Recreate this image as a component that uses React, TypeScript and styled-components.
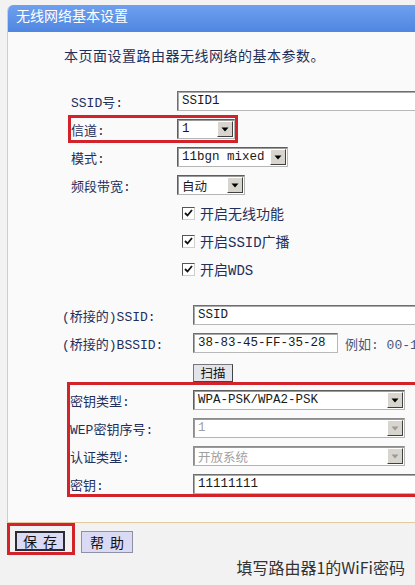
import { createGlobalStyle, styled } from "styled-components";

const RED = "#d2232a";
const NAVY = "#1f2f5a";
const UI_FONT = `"Liberation Mono", "Noto Sans CJK SC", monospace`;
const CJK_FONT = `"Noto Sans CJK SC", "Noto Sans", sans-serif`;

const GlobalStyle = createGlobalStyle`
  html, body {
    margin: 0;
    padding: 0;
    background: #f2f2f2;
    overflow: hidden;
  }
  * {
    box-sizing: border-box;
  }
`;

const Page = styled.div`
  width: 415px;
  height: 585px;
  overflow: hidden;
  padding-top: 5px;
  background: #f2f2f2;
`;

const Panel = styled.div`
  width: 470px;
  margin-left: 7px;
  background: #fafafa;
  border-left: 1px solid #e4cb9f;
  border-bottom: 1px solid #e4cb9f;
  border-top-left-radius: 6px;
  overflow: hidden;
`;

const PanelHeader = styled.div`
  height: 27px;
  padding-left: 8px;
  line-height: 27px;
  color: #fff;
  font: 14px ${CJK_FONT};
  background: linear-gradient(#6ea0f0, #4f86e0);
`;

const PanelBody = styled.div`
  padding: 15px 0 25px;
`;

const Intro = styled.p`
  margin: 0 0 24px 56px;
  font: 14px/16px ${CJK_FONT};
  letter-spacing: 0.5px;
  color: ${NAVY};
`;

const Section = styled.div<{ $indent: number; $gap?: number }>`
  margin-left: ${({ $indent }) => $indent}px;
  margin-bottom: ${({ $gap }) => $gap ?? 0}px;
`;

const Field = styled.div`
  display: flex;
  align-items: center;
`;

const Row = styled(Field)<{ $marked?: boolean }>`
  height: 28px;
  width: max-content;
  border: 3px solid ${({ $marked }) => ($marked ? RED : "transparent")};
`;

const Label = styled.span<{ $w: number }>`
  width: ${({ $w }) => $w}px;
  flex: none;
  white-space: nowrap;
  font: 13px ${UI_FONT};
  color: ${NAVY};
`;

const Hint = styled.span`
  margin-left: 7px;
  white-space: nowrap;
  font: 13px ${UI_FONT};
  color: #4a5878;
`;

const TextInput = styled.input<{ $w: number }>`
  width: ${({ $w }) => $w}px;
  height: 20px;
  margin: 0;
  padding: 0 4px;
  font: 12.5px ${UI_FONT};
  color: #1a1a1a;
  background: #fff;
  border: 1px solid #6f6f6f;
  border-right-color: #b8b8b8;
  border-bottom-color: #b8b8b8;
  box-shadow: inset 1px 1px 0 #a9a9a9;
  outline: none;
`;

const SelectBox = styled.div<{ $w: number; $off?: boolean }>`
  width: ${({ $w }) => $w}px;
  height: 20px;
  display: flex;
  align-items: center;
  padding: 1px;
  background: #fff;
  border: 1px solid ${({ $off }) => ($off ? "#8c8c8c" : "#5e5e5e")};
  border-right-color: #b5b5b5;
  border-bottom-color: #b5b5b5;
  box-shadow: inset 1px 1px 0 #9a9a9a;
`;

const SelectValue = styled.span<{ $off?: boolean }>`
  flex: 1;
  padding-left: 3px;
  white-space: nowrap;
  overflow: hidden;
  font: 12.5px ${UI_FONT};
  color: ${({ $off }) => ($off ? "#a0a0a0" : "#1a1a1a")};
`;

const ArrowButton = styled.span<{ $off?: boolean }>`
  width: 16px;
  height: 16px;
  flex: none;
  display: flex;
  align-items: center;
  justify-content: center;
  background: #d8d5cf;
  border: 1px solid;
  border-color: #fff #404040 #404040 #fff;
  color: ${({ $off }) => ($off ? "#9a9a9a" : "#000")};
`;

const CheckItem = styled.label`
  display: flex;
  align-items: center;
  gap: 5px;
  margin-left: 5px;
  font: 14px ${UI_FONT};
  color: ${NAVY};
`;

const CheckBox = styled.span`
  width: 13px;
  height: 13px;
  display: flex;
  align-items: center;
  justify-content: center;
  background: #fff;
  border: 1px solid;
  border-color: #555 #cfcfcf #cfcfcf #555;
`;

const ScanRow = styled.div`
  padding: 7px 0 0 193px;
  margin-left: -8px;
  height: 25px;
`;

const Button = styled.button<{ $focus?: boolean; $w: number }>`
  width: ${({ $w }) => $w}px;
  height: ${({ $focus }) => ($focus ? 20 : 22)}px;
  margin: 0;
  padding: 0 0 0 6px;
  font: 14px ${CJK_FONT};
  letter-spacing: 6px;
  line-height: 1;
  color: #111;
  background: #dadaf4;
  border: ${({ $focus }) => ($focus ? "2px solid #2b2b36" : "1px solid #8f90a6")};
`;

const ScanButton = styled(Button)`
  height: 18px;
  padding: 0;
  font-size: 12.5px;
  letter-spacing: 0;
  background: #e3e3ec;
  border: 1px solid #777;
  border-right-color: #444;
  border-bottom-color: #444;
`;

const KeyGroup = styled.div`
  width: 500px;
  margin-left: 59px;
  padding-top: 5px;
  display: flex;
  flex-direction: column;
  gap: 8px;
  border-style: solid;
  border-color: ${RED};
  border-width: 3px 0 3px 3px;
`;

const ButtonBar = styled.div`
  display: flex;
  align-items: flex-start;
  padding-left: 7px;
`;

const SaveMark = styled.div`
  padding: 5px 7px 1px 5px;
  border: 3px solid ${RED};
`;

const HelpButton = styled(Button)`
  margin: 8px 0 0 6px;
`;

const Caption = styled.div`
  padding-right: 10px;
  text-align: right;
  font: 16px/24px ${CJK_FONT};
  color: #333;
`;

function Select({ w, value, off }: { w: number; value: string; off?: boolean }) {
  return (
    <SelectBox $w={w} $off={off}>
      <SelectValue $off={off}>{value}</SelectValue>
      <ArrowButton $off={off}>
        <svg width="8" height="5" viewBox="0 0 8 5">
          <path d="M0.5 0.5h7L4 4.5z" fill="currentColor" />
        </svg>
      </ArrowButton>
    </SelectBox>
  );
}

function Check({ text }: { text: string }) {
  return (
    <Row>
      <Label $w={106} />
      <CheckItem>
        <CheckBox>
          <svg width="9" height="8" viewBox="0 0 9 8">
            <path d="M1 4l2.5 2.5L8 1" fill="none" stroke="#111" strokeWidth="1.8" />
          </svg>
        </CheckBox>
        {text}
      </CheckItem>
    </Row>
  );
}

export default function App() {
  return (
    <Page>
      <GlobalStyle />
      <Panel>
        <PanelHeader>无线网络基本设置</PanelHeader>
        <PanelBody>
          <Intro>本页面设置路由器无线网络的基本参数。</Intro>

          <Section $indent={60} $gap={18}>
            <Row>
              <Label $w={106}>SSID号:</Label>
              <TextInput $w={260} value="SSID1" readOnly />
            </Row>
            <Row $marked>
              <Label $w={106}>信道:</Label>
              <Select w={58} value="1" />
            </Row>
            <Row>
              <Label $w={106}>模式:</Label>
              <Select w={111} value="11bgn mixed" />
            </Row>
            <Row>
              <Label $w={106}>频段带宽:</Label>
              <Select w={68} value="自动" />
            </Row>
            <Check text="开启无线功能" />
            <Check text="开启SSID广播" />
            <Check text="开启WDS" />
          </Section>

          <Section $indent={51}>
            <Row>
              <Label $w={131}>(桥接的)SSID:</Label>
              <TextInput $w={240} value="SSID" readOnly />
            </Row>
            <Row>
              <Label $w={131}>(桥接的)BSSID:</Label>
              <TextInput $w={145} value="38-83-45-FF-35-28" readOnly />
              <Hint>例如: 00-1D-0F-11-22-33</Hint>
            </Row>
          </Section>
          <ScanRow>
            <ScanButton $w={40}>扫描</ScanButton>
          </ScanRow>

          <KeyGroup>
            <Field>
              <Label $w={123}>密钥类型:</Label>
              <Select w={212} value="WPA-PSK/WPA2-PSK" />
            </Field>
            <Field>
              <Label $w={123}>WEP密钥序号:</Label>
              <Select w={212} value="1" off />
            </Field>
            <Field>
              <Label $w={123}>认证类型:</Label>
              <Select w={212} value="开放系统" off />
            </Field>
            <Field>
              <Label $w={123}>密钥:</Label>
              <TextInput $w={240} value="11111111" readOnly />
            </Field>
          </KeyGroup>
        </PanelBody>
      </Panel>

      <ButtonBar>
        <SaveMark>
          <Button $w={50} $focus>
            保存
          </Button>
        </SaveMark>
        <HelpButton $w={52}>帮助</HelpButton>
      </ButtonBar>
      <Caption>填写路由器1的WiFi密码</Caption>
    </Page>
  );
}
